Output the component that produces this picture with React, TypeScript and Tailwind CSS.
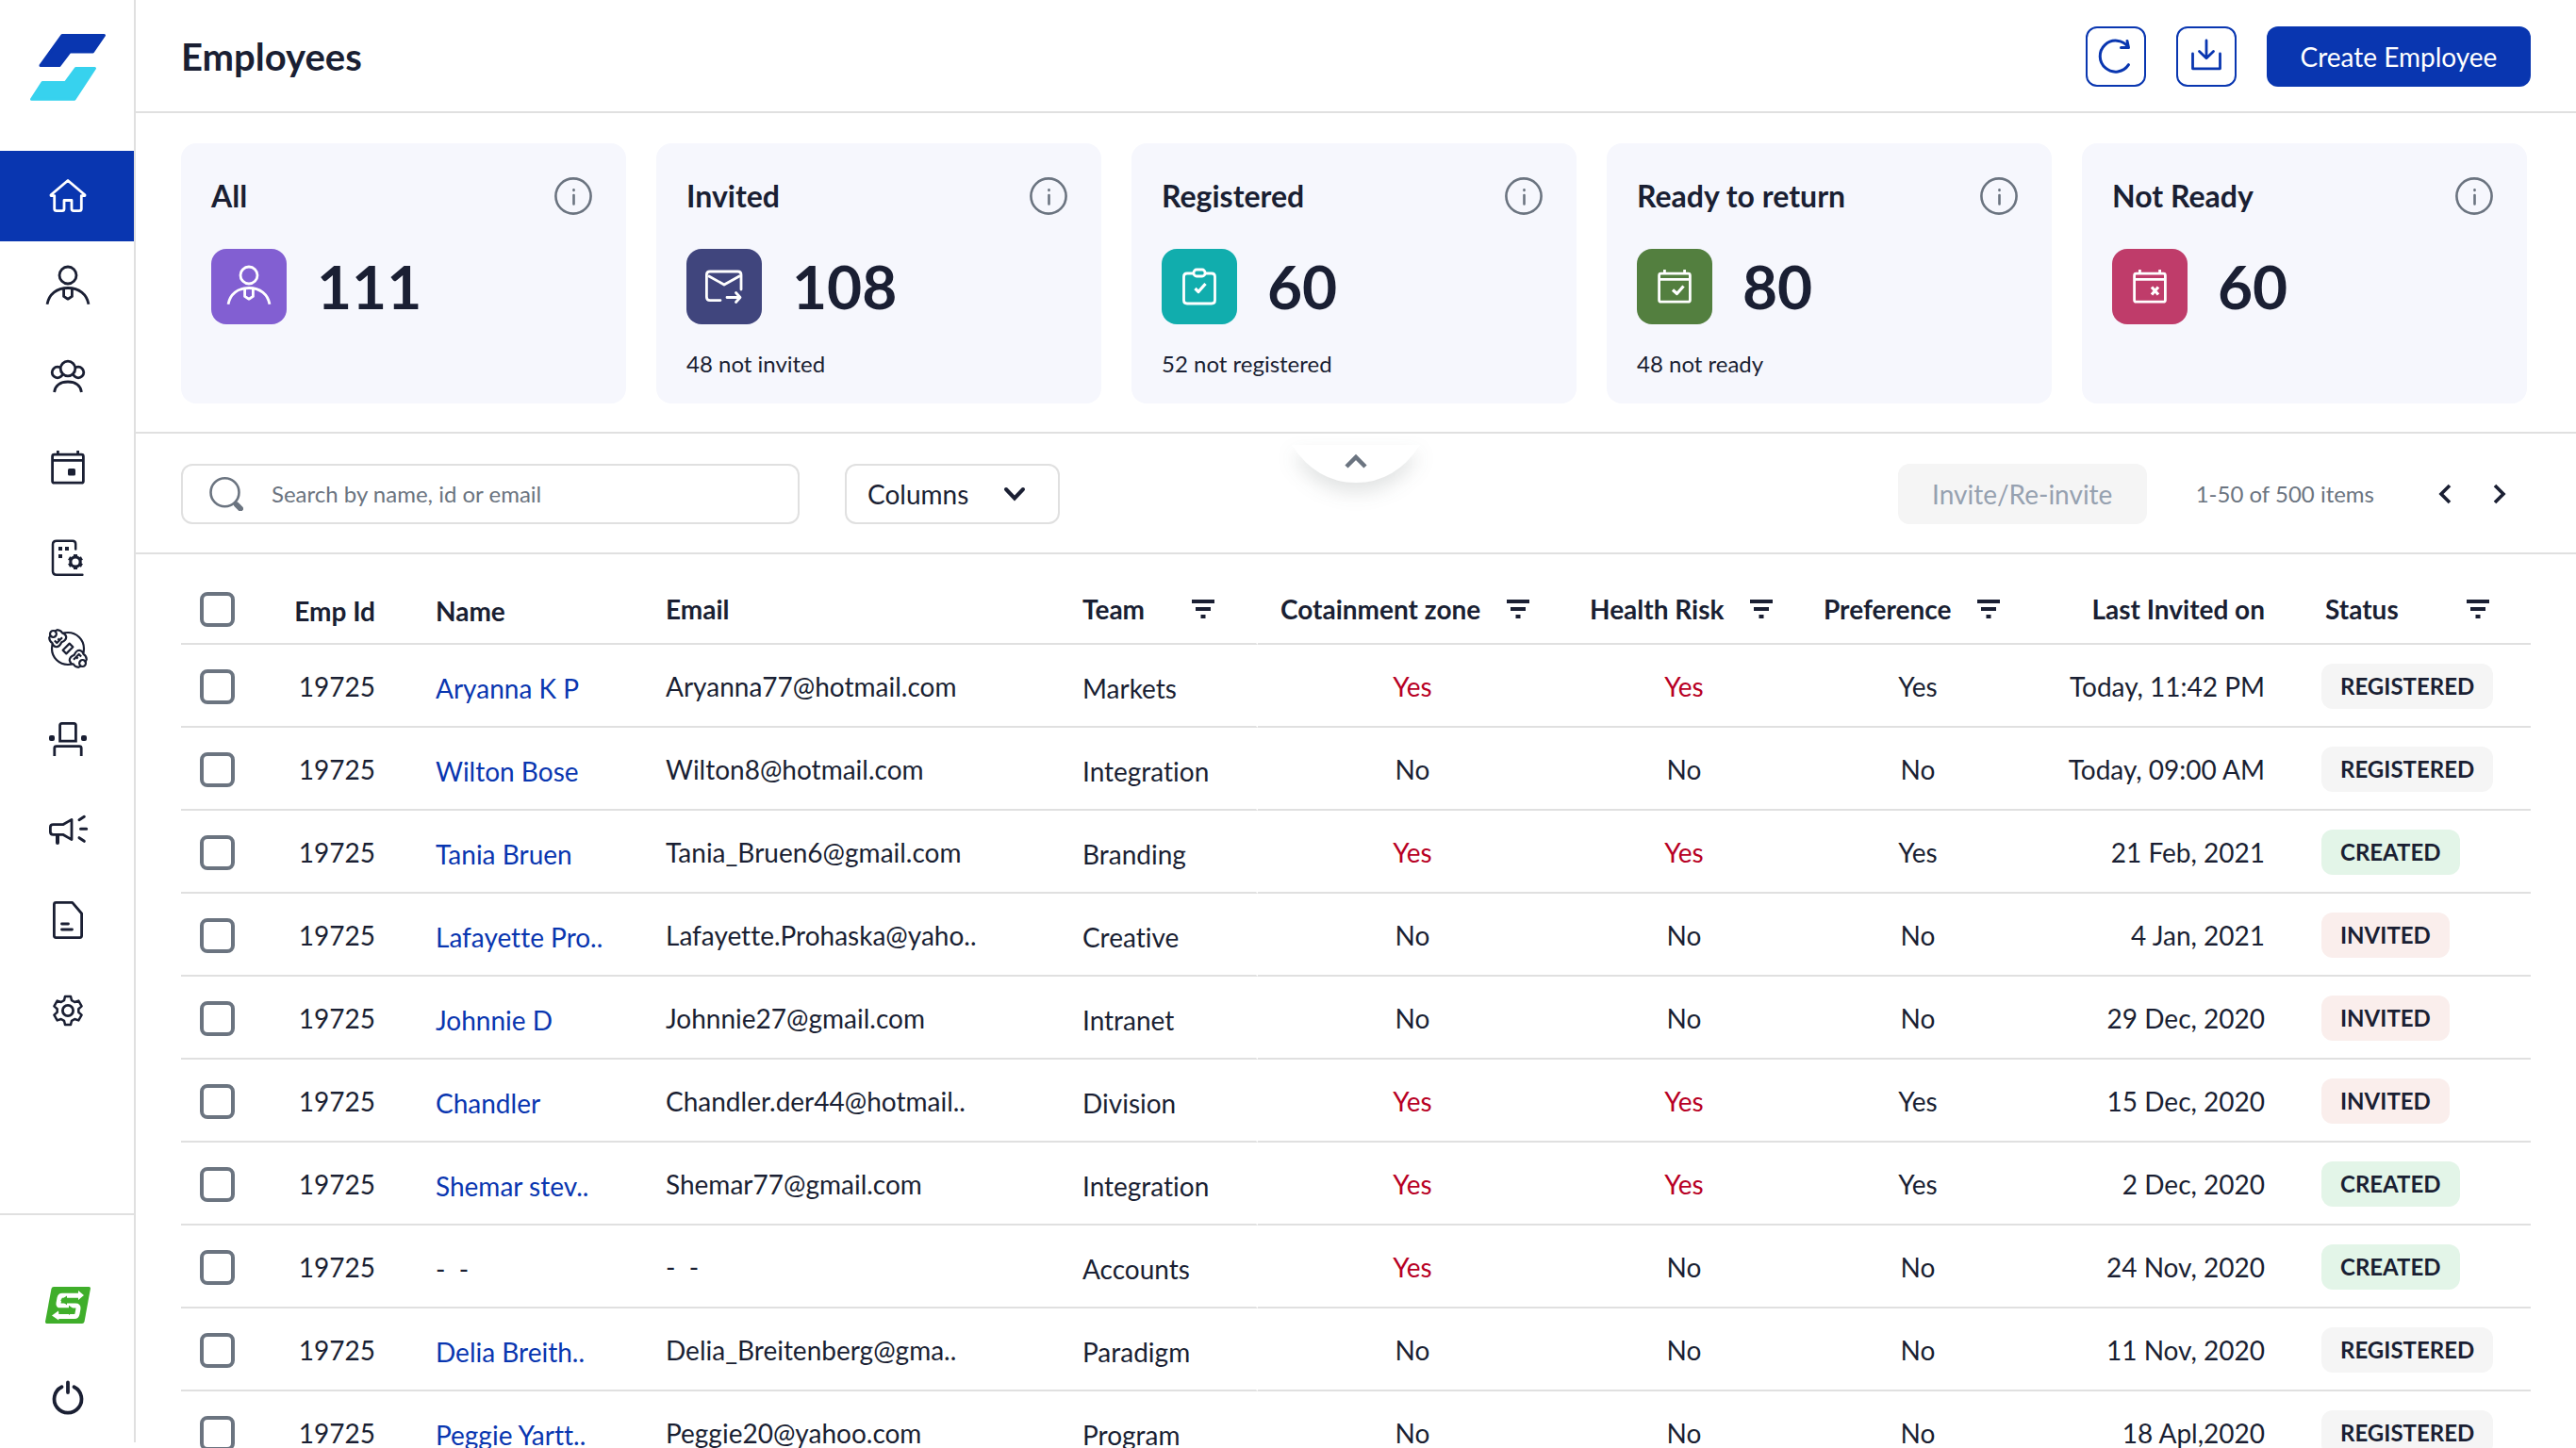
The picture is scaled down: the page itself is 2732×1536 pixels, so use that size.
import type { ReactNode } from 'react';

type Status = 'REGISTERED' | 'CREATED' | 'INVITED';

interface Employee {
  name: string;
  email: string;
  team: string;
  zone: boolean;
  risk: boolean;
  preference: boolean;
  invitedOn: string;
  status: Status;
}

const employees: Employee[] = [
  { name: 'Aryanna K P', email: 'Aryanna77@hotmail.com', team: 'Markets', zone: true, risk: true, preference: true, invitedOn: 'Today, 11:42 PM', status: 'REGISTERED' },
  { name: 'Wilton Bose', email: 'Wilton8@hotmail.com', team: 'Integration', zone: false, risk: false, preference: false, invitedOn: 'Today, 09:00 AM', status: 'REGISTERED' },
  { name: 'Tania Bruen', email: 'Tania_Bruen6@gmail.com', team: 'Branding', zone: true, risk: true, preference: true, invitedOn: '21 Feb, 2021', status: 'CREATED' },
  { name: 'Lafayette Pro..', email: 'Lafayette.Prohaska@yaho..', team: 'Creative', zone: false, risk: false, preference: false, invitedOn: '4 Jan, 2021', status: 'INVITED' },
  { name: 'Johnnie D', email: 'Johnnie27@gmail.com', team: 'Intranet', zone: false, risk: false, preference: false, invitedOn: '29 Dec, 2020', status: 'INVITED' },
  { name: 'Chandler', email: 'Chandler.der44@hotmail..', team: 'Division', zone: true, risk: true, preference: true, invitedOn: '15 Dec, 2020', status: 'INVITED' },
  { name: 'Shemar stev..', email: 'Shemar77@gmail.com', team: 'Integration', zone: true, risk: true, preference: true, invitedOn: '2 Dec, 2020', status: 'CREATED' },
  { name: '', email: '', team: 'Accounts', zone: true, risk: false, preference: false, invitedOn: '24 Nov, 2020', status: 'CREATED' },
  { name: 'Delia Breith..', email: 'Delia_Breitenberg@gma..', team: 'Paradigm', zone: false, risk: false, preference: false, invitedOn: '11 Nov, 2020', status: 'REGISTERED' },
  { name: 'Peggie Yartt..', email: 'Peggie20@yahoo.com', team: 'Program', zone: false, risk: false, preference: false, invitedOn: '18 Apl,2020', status: 'REGISTERED' },
];

const statusColors: Record<Status, string> = {
  REGISTERED: 'bg-[#f5f5f5]',
  CREATED: 'bg-[#e3f5e8]',
  INVITED: 'bg-[#faeeec]',
};

// All 48px icons are drawn around the origin.
function Icon({ children }: { children: ReactNode }) {
  return (
    <svg className="size-12 shrink-0" viewBox="-24 -24 48 48" fill="none" stroke="currentColor" strokeWidth="2.8" strokeLinejoin="round" aria-hidden="true">
      {children}
    </svg>
  );
}

const person = (
  <>
    <circle cy="-12" r="9" />
    <path d="M-22 18.7C-20 8 -12 1.5 0 1.5S20 8 22 18.7" />
    <path d="M-4.4 2V10.4L0 13.2L4.4 10.4V2" />
  </>
);

const calendar = (
  <>
    <rect x="-16.4" y="-13.8" width="32.8" height="30" rx="2" />
    <path d="M-16 -7.6H16M-10.6 -18V-14M10.6 -18V-14" />
  </>
);

const navItems: { label: string; icon: ReactNode }[] = [
  {
    label: 'Home',
    icon: (
      <path d="M0 -16.5L18 -1.2V-.4H14.3V13.5Q14.3 15.7 12 15.7H6Q4 15.7 4 13.5V4.5H-4V13.5Q-4 15.7 -6 15.7H-12Q-14.3 15.7 -14.3 13.5V-.4H-18V-1.2Z" />
    ),
  },
  { label: 'Employees', icon: person },
  {
    label: 'Teams',
    icon: (
      <>
        <circle cx="-11" cy="-5" r="5.8" />
        <circle cx="11" cy="-5" r="5.8" />
        <circle cy="-9" r="7.8" fill="#fff" />
        <path d="M-14.4 16C-13.6 9 -8 5 0 5S13.6 9 14.4 16" />
      </>
    ),
  },
  {
    label: 'Calendar',
    icon: (
      <>
        {calendar}
        <rect y="1" width="8" height="7.6" rx="1.6" fill="currentColor" stroke="none" />
      </>
    ),
  },
  {
    label: 'Facilities',
    icon: (
      <>
        <path d="M8.2 -9.5V-15Q8.2 -18.3 5 -18.3H-12Q-16 -18.3 -16 -14.5V14Q-16 17.7 -12 17.7H15.4" strokeLinecap="round" strokeWidth="2.5" />
        <path d="M-10 -12h4v4h-4ZM-3 -12h4v4h-4ZM-10 -4h4v4h-4Z" fill="currentColor" stroke="none" />
        <circle cx="8" cy="4" r="5.2" strokeWidth="3.2" />
        <path d="M8 -4V-1M8 9V12M1.1 0L3.7 1.5M12.3 6.5L14.9 8M1.1 8L3.7 6.5M12.3 1.5L14.9 0" strokeWidth="4" />
      </>
    ),
  },
  {
    label: 'Health',
    icon: (
      <>
        <circle r="17" strokeWidth="2.2" />
        <g transform="rotate(45)" strokeWidth="2.2">
          <path d="M-22 -6Q-25 0 -22 6Q-19 8.5 -16 7.5Q-13 9.5 -10 7.5Q-7.5 5 -9.5 0Q-7.5 -5 -10 -7.5Q-13 -9.5 -16 -7.5Q-19 -8.5 -22 -6Z" fill="#fff" />
          <path d="M22 -6Q25 0 22 6Q19 8.5 16 7.5Q13 9.5 10 7.5Q7.5 5 9.5 0Q7.5 -5 10 -7.5Q13 -9.5 16 -7.5Q19 -8.5 22 -6Z" fill="#fff" />
          <circle cx="-22" r="3.4" fill="#fff" />
          <circle cx="22" r="3.4" fill="#fff" />
          <rect x="-2.6" y="-5" width="5.2" height="10" />
          <path d="M-16 4H-12.5V-4M-12.5 0H-15M16 -4H12.5V4M12.5 0H15" />
        </g>
      </>
    ),
  },
  {
    label: 'Seating',
    icon: (
      <>
        <path d="M-8.4 2.2V-14.5Q-8.4 -16.6 -6.3 -16.6H6.3Q8.4 -16.6 8.4 -14.5V2.2Z" strokeLinejoin="miter" />
        <path d="M-14.2 18V9.6Q-14.2 7.6 -12.2 7.6H12.2Q14.2 7.6 14.2 9.6V18" />
        <rect x="-20" y="-4" width="6" height="6" rx="2" fill="currentColor" stroke="none" />
        <rect x="14" y="-4" width="6" height="6" rx="2" fill="currentColor" stroke="none" />
      </>
    ),
  },
  {
    label: 'Announcements',
    icon: (
      <>
        <path d="M-15.5 -5.3H-5.3L4 -10.6V10.6L-5.3 5.3H-15.5Q-18.6 5.3 -18.6 2.5V-2.5Q-18.6 -5.3 -15.5 -5.3Z" />
        <path d="M-11 6V14" strokeWidth="4" strokeLinecap="round" />
        <path d="M12 -10.3L17.3 -13.7M13.5 -.7H19.7M12 8.7L17.3 12.3" strokeLinecap="round" strokeWidth="3" />
      </>
    ),
  },
  {
    label: 'Reports',
    icon: (
      <>
        <path d="M4.7 -18.6L14.6 -7V16.6Q14.6 18.6 12.6 18.6H-12.6Q-14.6 18.6 -14.6 16.6V-16.6Q-14.6 -18.6 -12.6 -18.6Z" />
        <path d="M-6.5 4H.5M-6.5 10H4.5" strokeLinecap="round" />
      </>
    ),
  },
  {
    label: 'Settings',
    icon: (
      <>
        <path d="M-3 -15H3L4 -10.8L7.2 -9L11.3 -10.4L14.6 -4.6L11.3 -1.8V1.8L14.6 4.6L11.3 10.4L7.2 9L4 10.8L3 15H-3L-4 10.8L-7.2 9L-11.3 10.4L-14.6 4.6L-11.3 1.8V-1.8L-14.6 -4.6L-11.3 -10.4L-7.2 -9L-4 -10.8Z" strokeWidth="2.5" />
        <circle r="5.6" />
      </>
    ),
  },
];

const stats: { label: string; value: number; note?: string; color: string; icon: ReactNode }[] = [
  { label: 'All', value: 111, color: 'bg-[#825fd2]', icon: person },
  {
    label: 'Invited',
    value: 108,
    note: '48 not invited',
    color: 'bg-[#40457d]',
    icon: (
      <>
        <path d="M-4 14.6H-15Q-18.6 14.6 -18.6 11V-12.5Q-18.6 -16 -15 -16H14.5Q18 -16 18 -12.5V3" strokeLinecap="round" />
        <path d="M-17 -11.5L0 -2L17 -11.5" />
        <path d="M3 11.5H16.5M12.5 6.5L17 11.5L12.5 16.5" strokeLinecap="round" />
      </>
    ),
  },
  {
    label: 'Registered',
    value: 60,
    note: '52 not registered',
    color: 'bg-[#11adad]',
    icon: (
      <>
        <path d="M-6 -14H-13Q-16.5 -14 -16.5 -10.5V14.5Q-16.5 18 -13 18H13Q16.5 18 16.5 14.5V-10.5Q16.5 -14 13 -14H6" />
        <rect x="-6" y="-18" width="12" height="7" rx="3" />
        <path d="M-4.5 2L-1 5.5L6.5 -3" strokeWidth="3.2" />
      </>
    ),
  },
  {
    label: 'Ready to return',
    value: 80,
    note: '48 not ready',
    color: 'bg-[#537f3f]',
    icon: (
      <>
        {calendar}
        <path d="M-2 3.5L2.5 7.5L9.5 -.5" strokeWidth="3.2" />
      </>
    ),
  },
  {
    label: 'Not Ready',
    value: 60,
    color: 'bg-[#bf3c6a]',
    icon: (
      <>
        {calendar}
        <path d="M2 .5L9 8.5M9 .5L2 8.5" strokeWidth="3.2" />
      </>
    ),
  },
];

function Sidebar() {
  return (
    <aside className="mb-1.5 flex w-36 shrink-0 flex-col border-r-2 border-[#e0e0e0]">
      <a href="#" aria-label="Dashboard" className="flex h-40 justify-center pt-9 pl-0.5">
        <svg className="h-[71px] w-20" viewBox="0 0 80 71" strokeWidth="3" strokeLinejoin="round" aria-hidden="true">
          <path d="M34 1.5H78.5L66.5 19H42L31 33.5H11Z" fill="#0936b0" stroke="#0936b0" />
          <path d="M48.5 36.500H68.5L47 69.2H1.5L13 51.5H37.5Z" fill="#37d2ee" stroke="#37d2ee" />
        </svg>
      </a>
      <nav className="flex flex-col">
        {navItems.map((item, i) => (
          <a
            key={item.label}
            href="#"
            aria-label={item.label}
            className={`flex h-24 items-center justify-center pl-0.5 ${i === 0 ? 'bg-[#0936b0] text-white' : ''}`}
          >
            <Icon>{item.icon}</Icon>
          </a>
        ))}
      </nav>
      <div className="mt-auto flex flex-col items-center gap-14 border-t-2 border-[#e0e0e0] pt-19 pb-5.5 pl-0.5">
        <a href="#" aria-label="Switch workspace">
          <svg className="h-[39px] w-12" viewBox="0 0 48 39" fill="none" aria-hidden="true">
            <path d="M9 0H46.5Q48 0 48 1.5L41.5 37Q41 39 39 39H1.5Q0 39 0 37L6.5 2Q7 0 9 0Z" fill="#3fae2a" />
            <path d="M36 9.2H18Q15.5 9.2 15 12L14 17.5Q13.5 20 16 20H32Q35.5 20 35 23L34 28.5Q33.5 31.5 31 31.5H13" stroke="#fff" strokeWidth="5" />
            <path d="M41 9L35 4V14ZM7 30.5L14.3 25.3V35.5Z" fill="#fff" />
            <path d="M16 14.3L23 9.5V12.3H34V16.5H23V19.3ZM32 24.7L25 19.7V22.5H14.3V27H25V30Z" fill="#3fae2a" />
          </svg>
        </a>
        <button type="button" aria-label="Log out">
          <Icon>
            <path d="M-6.500 -12.8A14.5 14.5 0 1 0 6.5 -12.8M0 -17.5V-7" strokeWidth="3.8" strokeLinecap="round" />
          </Icon>
        </button>
      </div>
    </aside>
  );
}

function FilterButton({ label }: { label: string }) {
  return (
    <button type="button" aria-label={`Filter by ${label}`}>
      <svg className="h-5 w-6" viewBox="0 0 24 20" fill="currentColor" aria-hidden="true">
        <path d="M0 0H24V4H0ZM4 8H20V12H4ZM9.5 16H14.5V20H9.5Z" />
      </svg>
    </button>
  );
}

function Checkbox({ label }: { label: string }) {
  return (
    <input
      type="checkbox"
      aria-label={label}
      className="block size-[37px] appearance-none rounded-lg border-4 border-[#6b7480] bg-white checked:bg-[#0936b0]"
    />
  );
}

function Answer({ value, alert = false }: { value: boolean; alert?: boolean }) {
  return <span className={value && alert ? 'text-[#b80024]' : ''}>{value ? 'Yes' : 'No'}</span>;
}

export default function App() {
  return (
    <div className="flex h-screen overflow-hidden bg-white font-[Lato,sans-serif] text-[28px] leading-10 text-[#1a1f33] [font-variant-ligatures:none]">
      <Sidebar />

      <main className="min-w-0 flex-1">
        <header className="flex items-center gap-8 border-b-2 border-[#e0e0e0] px-12 pt-7 pb-[26px]">
          <h1 className="mr-auto text-[40px] font-bold">Employees</h1>
          <button type="button" aria-label="Refresh" className="flex size-16 items-center justify-center rounded-xl border-2 border-[#0936b0] text-[#0936b0]">
            <Icon>
              <path d="M13.5 8.7A16.500 16.5 0 1 1 13 -10.2M5.5 -9.5H13.5L12 -16.5" strokeWidth="3" strokeLinecap="round" />
            </Icon>
          </button>
          <button type="button" aria-label="Download" className="flex size-16 items-center justify-center rounded-xl border-2 border-[#0936b0] text-[#0936b0]">
            <Icon>
              <path d="M-14.5 -3V12.8H14.5V-3M0 -17V1.5M-7.5 -5.5L0 1.8L7.5 -5.5" strokeLinecap="round" />
            </Icon>
          </button>
          <button type="button" className="h-16 w-[280px] rounded-xl bg-[#0936b0] text-white">
            Create Employee
          </button>
        </header>

        <section className="grid grid-cols-5 gap-8 border-b-2 border-[#e0e0e0] pt-8 pr-[52px] pb-[30px] pl-12">
          {stats.map((stat) => (
            <article key={stat.label} className="rounded-2xl bg-[#f6f7fd] pt-9 pr-9 pb-6.5 pl-8">
              <div className="flex items-center justify-between">
                <h2 className="text-[32px] font-bold">{stat.label}</h2>
                <button type="button" aria-label={`About ${stat.label}`} className="text-[#6b7480]">
                  <svg className="size-10" viewBox="0 0 40 40" fill="none" stroke="currentColor" strokeWidth="2.6" strokeLinecap="round" aria-hidden="true">
                    <circle cx="20" cy="20" r="18.6" />
                    <path d="M20.5 19V28.5M20.5 13.2V14" />
                  </svg>
                </button>
              </div>
              <div className="mt-9 flex items-center gap-8">
                <span className={`flex size-20 items-center justify-center rounded-2xl text-white ${stat.color}`}>
                  <Icon>{stat.icon}</Icon>
                </span>
                <span className="text-[64px] leading-20 font-bold">{stat.value}</span>
              </div>
              {stat.note && <p className="mt-6.5 text-2xl">{stat.note}</p>}
            </article>
          ))}
        </section>

        <section className="relative flex items-center border-b-2 border-[#e0e0e0] pt-8 pr-[52px] pb-[30px] pl-12">
          <label className="flex h-16 w-[656px] items-center gap-[30px] rounded-xl border-2 border-[#e0e0e0] pl-7 text-[#6b7480]">
            <svg className="size-9 shrink-0" viewBox="0 0 36 36" fill="none" stroke="currentColor" aria-hidden="true">
              <circle cx="16.5" cy="16.3" r="15" strokeWidth="2.6" />
              <path d="M29 29.5L33 33.5" strokeWidth="6" strokeLinecap="round" />
              <path d="M26.5 26.5L29 29" strokeWidth="3" />
            </svg>
            <input
              type="search"
              aria-label="Search employees"
              placeholder="Search by name, id or email"
              className="w-full bg-transparent text-2xl outline-none placeholder:text-[#6b7480]"
            />
          </label>

          <div className="relative ml-12">
            <select aria-label="Columns" className="h-16 w-[228px] appearance-none rounded-xl border-2 border-[#e0e0e0] bg-white pl-[22px]">
              <option>Columns</option>
            </select>
            <svg className="pointer-events-none absolute top-6 right-9 h-4 w-6" viewBox="0 0 24 16" fill="none" stroke="currentColor" strokeWidth="4" strokeLinecap="round" aria-hidden="true">
              <path d="M3 3L12 12.5L21 3" />
            </svg>
          </div>

          <button type="button" aria-label="Collapse summary" className="absolute top-3 left-1/2 -translate-x-1/2 text-[#6b7480]">
            <svg className="h-10 w-34 overflow-visible drop-shadow-[0_10px_10px_rgba(40,60,60,0.14)]" viewBox="0 0 136 40" fill="none" aria-hidden="true">
              <path d="M0 0Q26 40 68 40T136 0Z" fill="#fff" />
              <path d="M58 23L68 13L78 23" stroke="currentColor" strokeWidth="4.5" />
            </svg>
          </button>

          <button type="button" disabled className="ml-auto h-16 w-[264px] rounded-xl bg-[#f5f5f5] text-[#96a1b0]">
            Invite/Re-invite
          </button>
          <span className="ml-13 text-2xl text-[#6b7480]">1-50 of 500 items</span>
          <div className="ml-[46px] flex">
            <button type="button" aria-label="Previous page" className="flex h-16 w-[58px] items-center justify-center">
              <svg className="h-6 w-4" viewBox="0 0 16 24" fill="none" stroke="currentColor" strokeWidth="3.6" aria-hidden="true">
                <path d="M13 3L4 12L13 21" />
              </svg>
            </button>
            <button type="button" aria-label="Next page" className="flex h-16 w-[58px] items-center justify-center">
              <svg className="h-6 w-4" viewBox="0 0 16 24" fill="none" stroke="currentColor" strokeWidth="3.6" aria-hidden="true">
                <path d="M3 3L12 12L3 21" />
              </svg>
            </button>
          </div>
        </section>

        <div className="px-12 pt-5">
          <table className="w-full table-fixed border-separate border-spacing-0 [&_td]:border-b-2 [&_td]:border-[#e0e0e0] [&_td]:pt-0.5 [&_th]:border-b-2 [&_th]:border-[#e0e0e0] [&_th]:pt-0.5">
            <colgroup>
              <col className="w-24" />
              <col className="w-[142px]" />
              <col className="w-[244px]" />
              <col />
              <col className="w-[218px]" />
              <col className="w-[328px]" />
              <col className="w-[248px]" />
              <col className="w-[248px]" />
              <col className="w-[276px]" />
              <col className="w-[250px]" />
            </colgroup>
            <thead>
              <tr className="h-[76px] text-left">
                <th className="pl-5"><Checkbox label="Select all employees" /></th>
                <th className="pt-1.5! pr-8 text-right">Emp Id</th>
                <th className="pt-1.5! pl-8">Name</th>
                <th className="pl-8">Email</th>
                <th className="border-r-2 border-r-white! pr-11 pl-8">
                  <div className="flex items-center justify-between">Team <FilterButton label="team" /></div>
                </th>
                <th className="pl-6">
                  <div className="flex items-center gap-7">Cotainment zone <FilterButton label="containment zone" /></div>
                </th>
                <th className="pl-6">
                  <div className="flex items-center gap-7">Health Risk <FilterButton label="health risk" /></div>
                </th>
                <th className="pl-6">
                  <div className="flex items-center gap-7">Preference <FilterButton label="preference" /></div>
                </th>
                <th className="pr-8 text-right">Last Invited on</th>
                <th className="pr-11 pl-8">
                  <div className="flex items-center justify-between">Status <FilterButton label="status" /></div>
                </th>
              </tr>
            </thead>
            <tbody>
              {employees.map((employee, i) => (
                <tr key={i} className="h-22">
                  <td className="pl-5"><Checkbox label={`Select ${employee.name || 'employee'}`} /></td>
                  <td className="pr-8 text-right">19725</td>
                  <td className="pt-1.5! pl-8 whitespace-pre">
                    {employee.name ? <a href="#" className="text-[#0936b0]">{employee.name}</a> : '-  -'}
                  </td>
                  <td className="pl-8 whitespace-pre">{employee.email || '-  -'}</td>
                  <td className="border-r-2 border-r-white! pt-1.5! pl-8">{employee.team}</td>
                  <td className="text-center"><Answer value={employee.zone} alert /></td>
                  <td className="text-center"><Answer value={employee.risk} alert /></td>
                  <td className="text-center"><Answer value={employee.preference} /></td>
                  <td className="pr-8 text-right">{employee.invitedOn}</td>
                  <td className="pl-7">
                    <span className={`inline-block rounded-xl px-5 py-1 align-middle text-2xl leading-10 font-bold ${statusColors[employee.status]}`}>
                      {employee.status}
                    </span>
                  </td>
                </tr>
              ))}
            </tbody>
          </table>
        </div>
      </main>
    </div>
  );
}
